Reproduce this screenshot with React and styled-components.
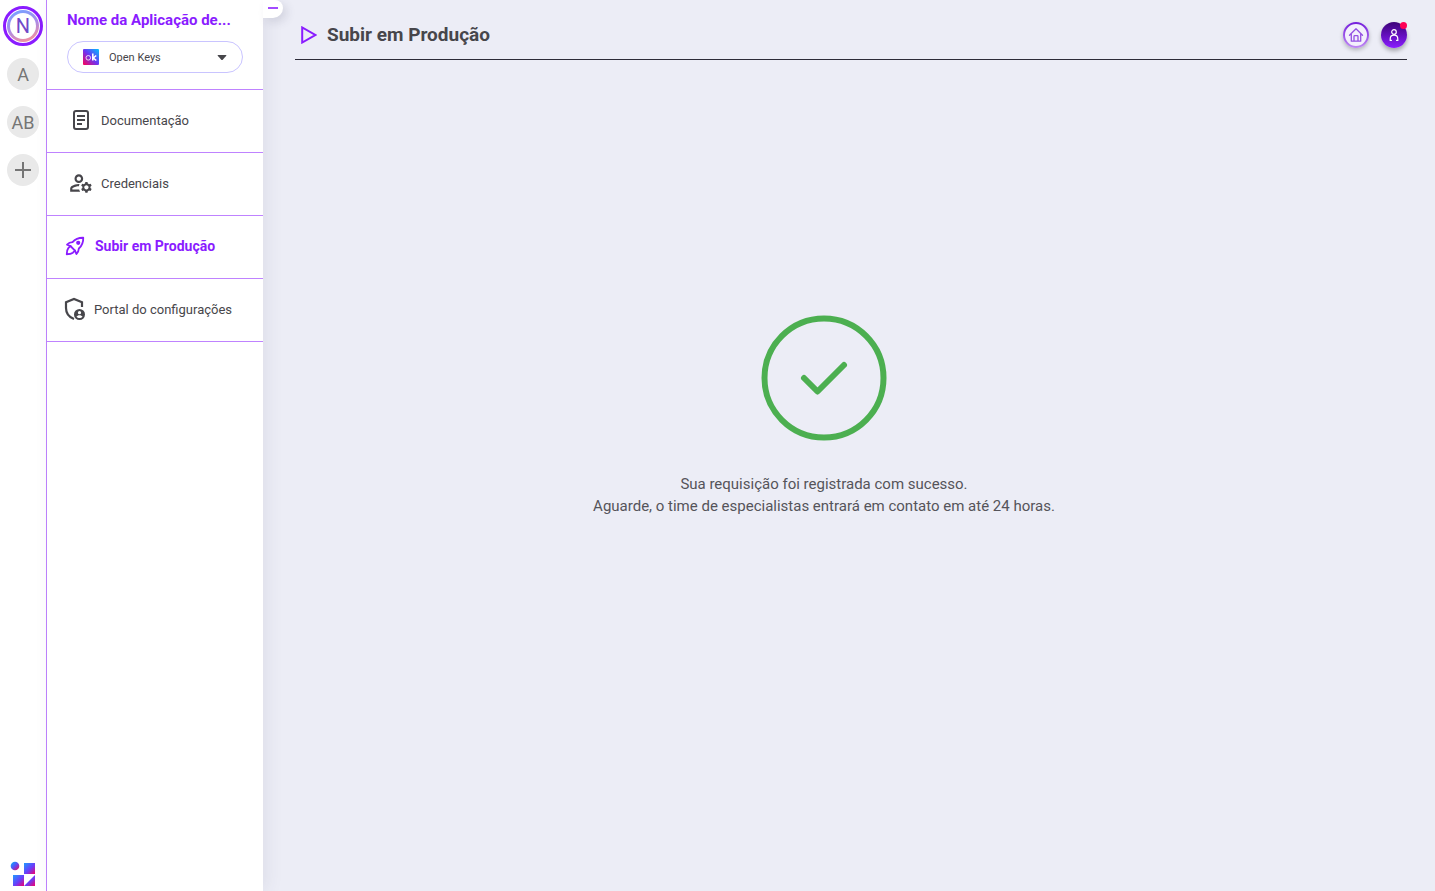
import React from 'react'
import styled, { createGlobalStyle, css } from 'styled-components'
import { MdOutlineManageAccounts } from 'react-icons/md'

const ArticleIcon = () => (
    <svg width="24" height="24" viewBox="0 0 24 24" fill="none" stroke="currentColor" strokeWidth="2" aria-hidden="true">
        <rect x="5" y="3" width="14" height="18" rx="2" />
        <path d="M8 8h8M8 12h8M8 16h5" />
    </svg>
)

const RocketIcon = () => (
    <svg width="22" height="22" viewBox="0 0 24 24" fill="none" stroke="currentColor" strokeWidth="2" strokeLinejoin="round" strokeLinecap="round" aria-hidden="true">
        <path d="M9.300 7.800C12.500 4 16.500 2.900 21 3c.1 4.500-1 8.500-4.800 11.700-.1 2.300-.9 4.300-2.700 6l-1.500-3.700-5-5L3.300 10.500c1.700-1.800 3.700-2.600 6-2.700z" />
        <path d="M7 12l-2.300 2.300C3.500 15.800 3 18.300 3 21c2.700 0 5.200-.5 6.700-1.700L12 17" />
        <circle cx="15.500" cy="8.500" r="1.300" fill="currentColor" />
    </svg>
)

const ShieldIcon = () => (
    <svg width="24" height="24" viewBox="0 0 24 24" fill="none" aria-hidden="true">
        <path d="M20 10V5.300L12 2 4 5.300V11c0 5 3.200 9.200 8 11" stroke="currentColor" strokeWidth="2.200" />
        <circle cx="17.500" cy="17.500" r="5.500" fill="currentColor" />
        <circle cx="17.500" cy="15.700" r="1.600" fill="#fff" />
        <path d="M14.500 19.700c.8-2.100 5.200-2.100 6 0-1.400 1.700-4.600 1.700-6 0z" fill="#fff" />
    </svg>
)

const items = [
    { label: 'Documentação', icon: <ArticleIcon />, inset: 22 },
    { label: 'Credenciais', icon: <MdOutlineManageAccounts size={26} />, inset: 22 },
    { label: 'Subir em Produção', icon: <RocketIcon />, inset: 16, active: true },
    { label: 'Portal do configurações', icon: <ShieldIcon />, inset: 15 },
]

const OpenKeysLogo = () => (
    <svg width="16" height="16" viewBox="0 0 16 16" aria-hidden="true">
        <defs>
            <linearGradient id="keys" x1="0" y1="1" x2="1" y2="0">
                <stop offset="0" stopColor="#ff0055" />
                <stop offset="0.5" stopColor="#6a35f5" />
                <stop offset="1" stopColor="#00c2ff" />
            </linearGradient>
        </defs>
        <rect width="16" height="16" rx="1" fill="url(#keys)" />
        <circle cx="5.3" cy="8.800" r="2.300" fill="none" stroke="#fff" strokeWidth="0.8" />
        <path d="M9.800 4.500V11.500M13.200 6.500L10.300 9l3 2.500" fill="none" stroke="#fff" strokeWidth="1.6" />
    </svg>
)

const BrandLogo = () => (
    <svg width="26" height="26" viewBox="0 0 26 26" role="img" aria-label="Open">
        <defs>
            <linearGradient id="ball" x1="0" y1="0" x2="1" y2="1">
                <stop offset="0" stopColor="#00b4ff" />
                <stop offset="0.5" stopColor="#5b4df5" />
                <stop offset="1" stopColor="#ff0050" />
            </linearGradient>
            <linearGradient id="tile" x1="0" y1="0" x2="1" y2="1">
                <stop offset="0" stopColor="#1e9bff" />
                <stop offset="0.55" stopColor="#6a3cfa" />
                <stop offset="1" stopColor="#f5006a" />
            </linearGradient>
        </defs>
        <circle cx="5" cy="5" r="4.3" fill="url(#ball)" />
        <path d="M14 2h11v11H14z" fill="url(#tile)" />
        <path d="M3 14h11v11H3z" fill="url(#tile)" />
        <path d="M25 14v11H14z" fill="url(#tile)" />
    </svg>
)

const App = () => (
    <Page>
        <GlobalStyle />
        <Rail aria-label="Aplicações">
            <CurrentApp><span>N</span></CurrentApp>
            <RailButton>A</RailButton>
            <RailButton>AB</RailButton>
            <RailButton aria-label="Adicionar">
                <svg width="18" height="18" viewBox="0 0 18 18" stroke="currentColor" strokeWidth="2">
                    <path d="M9 1v16M1 9h16" />
                </svg>
            </RailButton>
            <RailLogo><BrandLogo /></RailLogo>
        </Rail>
        <Sidebar>
            <SidebarHeader>
                <AppName>Nome da Aplicação de...</AppName>
                <Picker>
                    <OpenKeysLogo />
                    <select aria-label="Produto" defaultValue="keys">
                        <option value="keys">Open Keys</option>
                    </select>
                    <svg width="10" height="5" viewBox="0 0 10 5" aria-hidden="true"><path d="M1 0h8l.5.5L5.500 5h-1L.5.5z" fill="#47464b" /></svg>
                </Picker>
            </SidebarHeader>
            <nav>
                {items.map(item => (
                    <MenuLink href="#" key={item.label} $inset={item.inset} $active={item.active}>
                        <MenuIcon>{item.icon}</MenuIcon>
                        <span>{item.label}</span>
                    </MenuLink>
                ))}
            </nav>
            <Collapse aria-label="Recolher menu"><i /></Collapse>
        </Sidebar>
        <Main>
            <TopBar>
                <svg width="16" height="18" viewBox="0 0 16 18" fill="none" stroke="#8a1cff" strokeWidth="2" aria-hidden="true">
                    <path d="M1.200 1.500v15L14.300 9z" />
                </svg>
                <h1>Subir em Produção</h1>
                <Actions>
                    <HomeButton aria-label="Início">
                        <svg width="26" height="26" viewBox="0 0 26 26" fill="none">
                            <defs>
                                <linearGradient id="ring" x1="0" y1="0" x2="0" y2="1">
                                    <stop offset="0" stopColor="#7620dc" />
                                    <stop offset="1" stopColor="#bd86f2" />
                                </linearGradient>
                            </defs>
                            <circle cx="13" cy="13" r="12" fill="#f3effc" stroke="url(#ring)" strokeWidth="2" />
                            <path d="M6.500 13.200L13 6.800l6.500 6.400M8.300 12v7.200h9.400V12M11 19v-4.500q0-.8.8-.8h2.400q.8 0 .8.8V19" stroke="#9450e2" strokeWidth="1.300" strokeLinecap="round" strokeLinejoin="round" />
                        </svg>
                    </HomeButton>
                    <UserButton aria-label="Perfil">
                        <svg width="12" height="14" viewBox="0 0 12 14" fill="none" stroke="#fff" strokeWidth="1.200" strokeLinecap="round">
                            <circle cx="6" cy="4" r="2.300" />
                            <path d="M3.500 12.300h-1.300V11c0-2.200 1.500-3.800 3.800-3.800s3.800 1.600 3.800 3.800v1.300H8.500" />
                        </svg>
                        <Dot />
                    </UserButton>
                </Actions>
            </TopBar>
            <Result>
                <svg width="126" height="126" viewBox="0 0 126 126" fill="none" stroke="#4caf50" strokeLinecap="round" strokeLinejoin="round" aria-hidden="true">
                    <circle cx="63" cy="63" r="59.500" strokeWidth="6" />
                    <path d="M43 63l13.500 13.500L83 50" strokeWidth="6" />
                </svg>
                <p>
                    Sua requisição foi registrada com sucesso.<br />
                    Aguarde, o time de especialistas entrará em contato em até 24 horas.
                </p>
            </Result>
        </Main>
    </Page>
)

const GlobalStyle = createGlobalStyle`
    * {
        box-sizing: border-box;
    }
    body {
        margin: 0;
        background: #ecedf6;
        color: #47464b;
        font-family: Roboto, "Open Sans", sans-serif;
    }
    button {
        padding: 0;
        border: none;
        font: inherit;
        cursor: pointer;
    }
`

const Page = styled.div`
    display: flex;
    min-height: 100vh;
`

const Rail = styled.aside`
    flex: 0 0 47px;
    display: flex;
    flex-direction: column;
    align-items: center;
    gap: 16px;
    padding-top: 6px;
    background: #fff;
    border-right: 1px solid #bf83ff;
`

const round = css`
    display: flex;
    align-items: center;
    justify-content: center;
    border-radius: 50%;
`

const CurrentApp = styled.button`
    ${round}
    width: 40px;
    height: 40px;
    margin-bottom: -4px;
    background: #fff;
    && {
        border: 3px solid #8a1cff;
    }
    span {
        ${round}
        width: 32px;
        height: 32px;
        border: 3px solid transparent;
        background: linear-gradient(#fff, #fff) padding-box, linear-gradient(160deg, #7aa0ff 10%, #a98be8 50%, #f58f9c 90%) border-box;
        color: #7049c9;
        font-size: 20px;
    }
`

const RailButton = styled.button`
    ${round}
    width: 32px;
    height: 32px;
    background: #e9e9e9;
    color: #757575;
    && {
        font-size: 18px;
    }
`

const RailLogo = styled.div`
    display: flex;
    margin-top: auto;
    padding-bottom: 4px;
`

const Sidebar = styled.aside`
    position: relative;
    flex: 0 0 216px;
    background: #fff;
    box-shadow: 4px 0 16px rgba(60, 60, 90, 0.08);
`

const SidebarHeader = styled.div`
    padding: 10px 20px 16px;
    border-bottom: 1px solid #bf83ff;
`

const AppName = styled.h2`
    margin: 0 0 11px;
    color: #8a1cff;
    font-size: 15px;
    line-height: 20px;
    white-space: nowrap;
`

const Picker = styled.label`
    display: flex;
    align-items: center;
    gap: 10px;
    height: 32px;
    padding: 0 15px;
    border: 1px solid #c9c4ff;
    border-radius: 16px;
    select {
        flex: 1;
        min-width: 0;
        padding: 0;
        appearance: none;
        border: none;
        background: none;
        color: inherit;
        font-family: inherit;
        font-size: 11px;
    }
`

const MenuLink = styled.a`
    display: flex;
    align-items: center;
    gap: 8px;
    height: 63px;
    padding: 0 0 2px ${props => props.$inset}px;
    border-bottom: 1px solid #bf83ff;
    color: ${props => props.$active ? '#8a1cff' : '#47464b'};
    font-size: ${props => props.$active ? 14 : 13}px;
    font-weight: ${props => props.$active ? 700 : 400};
    text-decoration: none;
`

const MenuIcon = styled.span`
    flex: none;
    display: flex;
    justify-content: center;
    width: 24px;
    svg {
        flex: none;
    }
`

const Collapse = styled.button`
    position: absolute;
    top: 0;
    left: 100%;
    width: 20px;
    height: 18px;
    background: #fff;
    border-radius: 0 8px 10px 0;
    box-shadow: 4px 4px 10px rgba(60, 60, 90, 0.14);
    i {
        display: block;
        width: 10px;
        height: 2px;
        margin: 0 auto 2px;
        background: #a24bff;
    }
`

const Main = styled.main`
    flex: 1;
    display: flex;
    flex-direction: column;
    padding: 10px 28px 0 32px;
`

const TopBar = styled.header`
    display: flex;
    align-items: center;
    height: 50px;
    padding-left: 6px;
    border-bottom: 1px solid #2c2b38;
    h1 {
        margin: 0 0 0 10px;
        font-size: 19px;
        line-height: 24px;
    }
`

const Actions = styled.div`
    display: flex;
    gap: 12px;
    margin-left: auto;
`

const HomeButton = styled.button`
    ${round}
    width: 26px;
    height: 26px;
    background: none;
    box-shadow: 0 2px 4px rgba(0, 0, 0, 0.25);
`

const UserButton = styled.button`
    ${round}
    position: relative;
    width: 26px;
    height: 26px;
    background: linear-gradient(#3c0278, #8a1cff);
    box-shadow: 0 3px 4px rgba(0, 0, 0, 0.3);
`

const Dot = styled.span`
    position: absolute;
    top: 0;
    right: 0;
    width: 7px;
    height: 7px;
    border-radius: 50%;
    background: #ff0055;
`

const Result = styled.section`
    flex: 1;
    display: flex;
    flex-direction: column;
    align-items: center;
    justify-content: center;
    gap: 32px;
    padding: 0 54px 120px 0;
    text-align: center;
    p {
        margin: 0;
        color: #55545a;
        font-size: 15px;
        line-height: 22px;
    }
`

export default App
